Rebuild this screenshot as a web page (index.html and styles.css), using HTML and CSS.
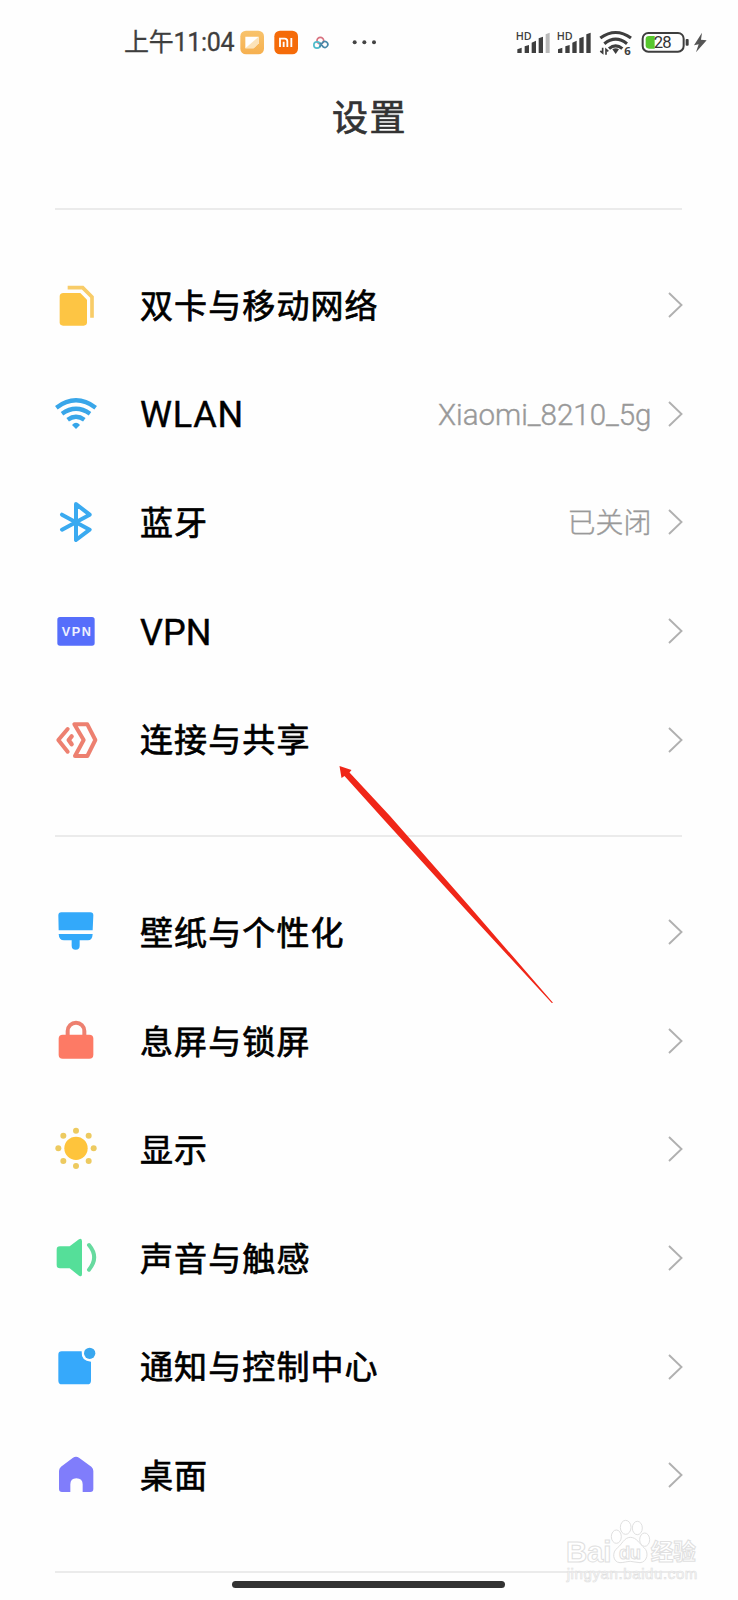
FILE: index.html
```html
<!DOCTYPE html>
<html lang="zh-CN">
<head>
<meta charset="utf-8">
<title>设置</title>
<link rel="stylesheet" href="styles.css">
</head>
<body>
<div class="screen">
  <header class="status">
    <span class="time">上午11:04</span>
    <svg class="st-apps" viewBox="384 0 426 180">
      <defs><linearGradient id="nt" x1="0" y1="0" x2="0" y2="1"><stop offset="0" stop-color="#f8c36c"/><stop offset="1" stop-color="#f6b04f"/></linearGradient></defs>
      <rect x="391" y="47" width="71" height="71" rx="17" fill="url(#nt)"/>
      <path d="M406 65H446V85L431 100H406Z" fill="#fff"/><path d="M406 100L446 65V85L431 100Z" fill="#fce3b8"/>
      <rect x="493" y="47" width="71" height="71" rx="17" fill="#f56b09"/>
      <g fill="none" stroke="#fff" stroke-width="5.5"><path d="M510 96V71H524Q532 71 532 79V96M521 96V80M544 69V96"/></g>
      <g fill="none" stroke-width="5"><circle cx="631" cy="77" r="10" stroke="#d8707e"/><circle cx="621" cy="90" r="9.5" stroke="#50bccb"/><path d="M630 83L640 96A9 9 0 1 0 638 82L629 96" stroke="#4787a8"/></g>
      <g fill="#444"><circle cx="734" cy="82" r="6"/><circle cx="763" cy="82" r="6"/><circle cx="792" cy="82" r="6"/></g>
    </svg>
    <svg class="st-system" viewBox="40 0 590 180">
      <g fill="#3e3e3e">
        <g class="hd"><text x="48" y="75" textLength="48" lengthAdjust="spacingAndGlyphs">HD</text><text x="171" y="75" textLength="48" lengthAdjust="spacingAndGlyphs">HD</text></g>
        <path d="M53 103L66 98V114H53ZM75 94L88 90V114H75ZM96 83L109 77V114H96ZM117 70L130 65V114H117Z"/>
        <path d="M138 58L150 53V114H138Z" fill="#b9b9b9"/>
        <path d="M175 103L188 98V114H175ZM197 94L210 90V114H197ZM218 83L231 77V114H218ZM239 70L252 65V114H239ZM260 58L273 53V114H260Z"/>
        <path d="M338 103Q348 97 358 103L348 117Z"/>
        <path d="M309 98V114L302 108M319 119V103L326 109" fill="none" stroke="#3e3e3e" stroke-width="5"/>
        <text class="six" x="374" y="120">6</text>
        <path d="M583 91L607 53L604 74L621 76L589 112L597 88Z" fill="#555"/>
        <rect x="558" y="72" width="9" height="20" rx="3"/>
      </g>
      <g fill="none" stroke="#3e3e3e" stroke-width="9.5">
        <path d="M302 69Q348 36 394 69M314 86Q348 59 382 86M328 101Q348 84 368 101"/>
        <rect x="429" y="54" width="123" height="56" rx="17" stroke-width="6"/>
      </g>
      <path d="M448 63H465V101H448Q438 101 438 91V73Q438 63 448 63Z" fill="#57c72d"/>
      <text class="pct" x="462" y="100" textLength="54">28</text>
    </svg>
  </header>
  <h1 class="title">设置</h1>

  <section class="group">
    <div class="row">
      <svg class="icon" viewBox="35 33 144 144"><path d="M69 69H120L140 89V157Q140 167 130 167H68Q58 167 58 157V80Q58 69 69 69Z" fill="#fdc544"/><path d="M82 53H127L155 81V143" fill="none" stroke="#f8cc68" stroke-width="11"/></svg>
      <span class="label">双卡与移动网络</span>
      <svg class="chev" viewBox="0 0 15 26"><path d="M1 1L13.5 13L1 25"/></svg>
    </div>
    <div class="row">
      <svg class="icon" viewBox="35 359 144 144"><g fill="none" stroke="#39a6e9" stroke-width="13"><path d="M48 412Q107 368 166 412M65 430Q107 400 149 430M82 448Q107 430 132 448"/></g><path d="M95 464Q107 451 119 464L107 476Z" fill="#36a5e9"/></svg>
      <span class="label latin wlan">WLAN</span>
      <span class="value latin-value">Xiaomi_8210_5g</span>
      <svg class="chev" viewBox="0 0 15 26"><path d="M1 1L13.5 13L1 25"/></svg>
    </div>
    <div class="row">
      <svg class="icon" viewBox="35 685 144 144"><path d="M65 735L148 780L107 811V703L148 735L65 780" fill="none" stroke="#3aaaf0" stroke-width="12" stroke-linecap="round" stroke-linejoin="round"/></svg>
      <span class="label">蓝牙</span>
      <span class="value">已关闭</span>
      <svg class="chev" viewBox="0 0 15 26"><path d="M1 1L13.5 13L1 25"/></svg>
    </div>
    <div class="row">
      <svg class="icon" viewBox="35 51 144 144"><rect x="51" y="81" width="112" height="86" rx="8" fill="#566efb"/><text class="vpn" x="64" y="138" textLength="88">VPN</text></svg>
      <span class="label latin">VPN</span>
      <svg class="chev" viewBox="0 0 15 26"><path d="M1 1L13.5 13L1 25"/></svg>
    </div>
    <div class="row">
      <svg class="icon" viewBox="35 377 144 144"><g fill="none" stroke="#ed8070" stroke-width="12" stroke-linecap="round" stroke-linejoin="round"><path d="M82 416L54 449L82 484"/><path d="M94 438L85 449L94 462" stroke-width="13"/><path d="M102 402H141L165 449L141 497H104L130 449Z"/></g></svg>
      <span class="label">连接与共享</span>
      <svg class="chev" viewBox="0 0 15 26"><path d="M1 1L13.5 13L1 25"/></svg>
    </div>
  </section>

  <section class="group">
    <div class="row">
      <svg class="icon" viewBox="35 56 144 144"><path d="M63 69H150Q159 69 159 78L157 123H55L54 78Q54 69 63 69ZM55 134H157Q156 153 143 153H118V169Q118 181 106 181Q94 181 94 169V153H71Q56 153 55 134Z" fill="#33a9fa"/></svg>
      <span class="label">壁纸与个性化</span>
      <svg class="chev" viewBox="0 0 15 26"><path d="M1 1L13.5 13L1 25"/></svg>
    </div>
    <div class="row">
      <svg class="icon" viewBox="35 382 144 144"><path d="M82 440V424A25 25 0 0 1 132 424V440" fill="none" stroke="#ed8070" stroke-width="12"/><rect x="55" y="435" width="104" height="72" rx="12" fill="#fd7a65"/></svg>
      <span class="label">息屏与锁屏</span>
      <svg class="chev" viewBox="0 0 15 26"><path d="M1 1L13.5 13L1 25"/></svg>
    </div>
    <div class="row">
      <svg class="icon" viewBox="35 708 144 144"><circle cx="107" cy="778" r="35" fill="#fec43c"/><g fill="#edca60"><circle cx="107" cy="725" r="9"/><circle cx="145" cy="740" r="9"/><circle cx="160" cy="778" r="9"/><circle cx="145" cy="816" r="9"/><circle cx="107" cy="831" r="9"/><circle cx="69" cy="816" r="9"/><circle cx="54" cy="778" r="9"/><circle cx="69" cy="740" r="9"/></g></svg>
      <span class="label">显示</span>
      <svg class="chev" viewBox="0 0 15 26"><path d="M1 1L13.5 13L1 25"/></svg>
    </div>
    <div class="row">
      <svg class="icon" viewBox="35 44 144 144"><path d="M59 81H88L116 60Q125 55 125 66V164Q125 175 116 169L88 147H59Q49 147 49 137V91Q49 81 59 81Z" fill="#55df99"/><path d="M146 77Q177 114 146 151" fill="none" stroke="#67da9f" stroke-width="12" stroke-linecap="round"/></svg>
      <span class="label">声音与触感</span>
      <svg class="chev" viewBox="0 0 15 26"><path d="M1 1L13.5 13L1 25"/></svg>
    </div>
    <div class="row">
      <svg class="icon" viewBox="35 370 144 144"><path d="M64 395H124Q122 425 152 426V483Q152 494 141 494H65Q54 494 54 483V405Q54 395 64 395Z" fill="#36a9fb"/><circle cx="148" cy="401" r="17" fill="#39a7ef"/></svg>
      <span class="label">通知与控制中心</span>
      <svg class="chev" viewBox="0 0 15 26"><path d="M1 1L13.5 13L1 25"/></svg>
    </div>
    <div class="row">
      <svg class="icon" viewBox="35 696 144 144"><path d="M97 717Q107 710 117 717L153 743Q159 748 159 756V810Q159 819 150 819H127V796Q127 778 108 778Q90 778 90 796V819H65Q56 819 56 810V756Q56 748 62 743Z" fill="#807dfb"/></svg>
      <span class="label">桌面</span>
      <svg class="chev" viewBox="0 0 15 26"><path d="M1 1L13.5 13L1 25"/></svg>
    </div>
  </section>
  <footer class="bottom"><div class="home-bar"></div></footer>

  <svg class="arrow" viewBox="0 0 260 270"><path d="M29.5 16L41.5 20L39.5 22.5L80 66L160 157L243 252.8L241.8 252.9L156 160L75 71L34.5 26L31.5 28Z" fill="#f02618"/></svg>

  <svg class="watermark" viewBox="0 0 594 360">
    <g fill="#fff" stroke="#e0e0e0" stroke-width="3">
      <text class="wm-big" x="78" y="245" textLength="136">Bai</text>
      <ellipse cx="229" cy="170" rx="15" ry="20"/><ellipse cx="257" cy="142" rx="16" ry="21"/><ellipse cx="292" cy="144" rx="15" ry="20"/><ellipse cx="314" cy="179" rx="15" ry="20"/>
      <path d="M271 172C290 172 299 192 312 203C328 216 322 247 300 248C289 248 280 244 271 244C261 244 252 248 240 248C218 247 215 216 232 204C245 194 253 172 271 172Z"/>
      <text class="wm-du" x="237" y="237" textLength="66">du</text>
      <text class="wm-cn" x="332" y="240" textLength="136">经验</text>
      <text class="wm-url" x="80" y="298" textLength="392">jingyan.baidu.com</text>
    </g>
  </svg>
</div>
</body>
</html>
```
FILE: styles.css
```css
* { box-sizing: border-box; }
body { margin: 0; background: #fefefe; font-family: Roboto, "Noto Sans CJK SC", sans-serif; }
.screen { position: relative; width: 738px; height: 1600px; overflow: hidden; display: flex; flex-direction: column; }
.status { display: flex; align-items: flex-start; height: 75px; padding: 15px 0 0 124px; flex: none; }
.time { width: 114px; padding-top: 1px; font-size: 25px; line-height: 54px; letter-spacing: -0.3px; color: #3e3e3e; white-space: nowrap; -webkit-text-stroke: 0.3px #3e3e3e; }
.st-apps { width: 142px; height: 60px; flex: none; }
.st-system { width: 196.67px; height: 60px; margin-left: 133.3px; flex: none; }
.hd { font: 600 34px "Open Sans", sans-serif; }
.six { font: 700 34px "Open Sans", sans-serif; }
.pct { font: 400 50px Roboto, sans-serif; fill: #333; }
.title { margin: 0; height: 133px; flex: none; padding: 17px 0 0 1px; text-align: center; font-size: 36px; line-height: 54px; font-weight: 400; letter-spacing: 1.5px; color: #333; -webkit-text-stroke: 0.7px #333; }
.group { flex: none; margin: 0 56px 0 55px; border-top: 2px solid #ebebeb; padding: 40.6px 0 41.3px; }
.row { display: flex; align-items: center; height: 108.7px; }
.group + .group .row { height: 108.6px; }
.icon { width: 48px; height: 48px; margin-left: -3.3px; flex: none; }
.vpn { font: 700 38px "Liberation Sans", sans-serif; fill: #eef0ff; }
.label { flex: 1; margin-left: 40.3px; padding-top: 3.6px; font-size: 33px; letter-spacing: 1.1px; line-height: 48px; color: #000; white-space: nowrap; -webkit-text-stroke: 0.7px #000; }
.latin { font-size: 36px; letter-spacing: 0; padding-top: 3.4px; -webkit-text-stroke-width: 0.4px; }
.wlan { letter-spacing: 0.8px; }
.value { font-size: 28px; line-height: 42px; padding-top: 3px; color: #999; white-space: nowrap; margin-right: 16px; font-weight: 300; -webkit-text-stroke: 0.4px #999; }
.latin-value { font-size: 29.5px; }
.chev { width: 15px; height: 26px; margin-right: -0.5px; flex: none; fill: none; stroke: #b0b0b0; stroke-width: 1.9; }
.bottom { flex: 1; margin: 0 56px 0 55px; border-top: 2px solid #ebebeb; display: flex; justify-content: center; align-items: flex-start; padding-top: 8px; }
.home-bar { width: 273px; height: 7px; border-radius: 4px; background: #333; }
.arrow { position: absolute; left: 310px; top: 750px; width: 260px; height: 270px; }
.watermark { position: absolute; left: 540px; top: 1480px; width: 198px; height: 120px; }
.wm-big { font: 700 88px "Liberation Sans", sans-serif; }
.wm-du { font: 700 55px "Liberation Sans", sans-serif; }
.wm-cn { font: 700 68px "Noto Sans CJK SC", sans-serif; }
.wm-url { font: 400 45px "Liberation Sans", sans-serif; stroke-width: 2; }
```
